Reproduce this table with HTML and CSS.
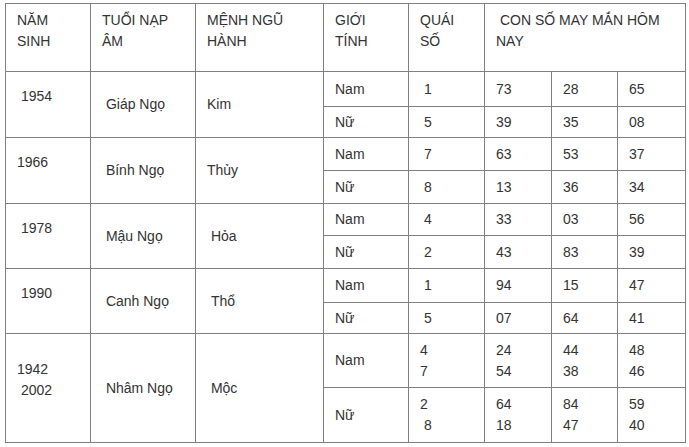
FILE: index.html
```html
<!DOCTYPE html>
<html lang="vi">
<head>
<meta charset="utf-8">
<title>Con số may mắn tuổi Ngọ</title>
<link rel="stylesheet" href="styles.css">
</head>
<body>
<table class="lucky">
  <colgroup>
    <col class="c1"><col class="c2"><col class="c3"><col class="c4"><col class="c5"><col class="c6"><col class="c7"><col class="c8">
  </colgroup>
  <tr class="head">
    <th>NĂM SINH</th>
    <th>TUỔI NẠP ÂM</th>
    <th>MỆNH NGŨ HÀNH</th>
    <th>GIỚI TÍNH</th>
    <th>QUÁI SỐ</th>
    <th colspan="3">&nbsp;CON SỐ MAY MẮN HÔM NAY</th>
  </tr>
  <tr class="h35">
    <td rowspan="2" class="year">&nbsp;1954</td>
    <td rowspan="2">&nbsp;Giáp Ngọ</td>
    <td rowspan="2">Kim</td>
    <td>Nam</td><td>&nbsp;1</td><td>73</td><td>28</td><td>65</td>
  </tr>
  <tr class="h31">
    <td>Nữ</td><td>&nbsp;5</td><td>39</td><td>35</td><td>08</td>
  </tr>
  <tr class="h33">
    <td rowspan="2" class="year">1966</td>
    <td rowspan="2">&nbsp;Bính Ngọ</td>
    <td rowspan="2">Thủy</td>
    <td>Nam</td><td>&nbsp;7</td><td>63</td><td>53</td><td>37</td>
  </tr>
  <tr class="h33">
    <td>Nữ</td><td>&nbsp;8</td><td>13</td><td>36</td><td>34</td>
  </tr>
  <tr class="h32">
    <td rowspan="2" class="year">&nbsp;1978</td>
    <td rowspan="2">&nbsp;Mậu Ngọ</td>
    <td rowspan="2">&nbsp;Hỏa</td>
    <td>Nam</td><td>&nbsp;4</td><td>33</td><td>03</td><td>56</td>
  </tr>
  <tr class="h33">
    <td>Nữ</td><td>&nbsp;2</td><td>43</td><td>83</td><td>39</td>
  </tr>
  <tr class="h34">
    <td rowspan="2" class="year">&nbsp;1990</td>
    <td rowspan="2">&nbsp;Canh Ngọ</td>
    <td rowspan="2">&nbsp;Thổ</td>
    <td>Nam</td><td>&nbsp;1</td><td>94</td><td>15</td><td>47</td>
  </tr>
  <tr class="h31">
    <td>Nữ</td><td>&nbsp;5</td><td>07</td><td>64</td><td>41</td>
  </tr>
  <tr class="h54">
    <td rowspan="2" class="year">1942<br>&nbsp;2002</td>
    <td rowspan="2">&nbsp;Nhâm Ngọ</td>
    <td rowspan="2">&nbsp;Mộc</td>
    <td>Nam</td><td>4<br>7</td><td>24<br>54</td><td>44<br>38</td><td>48<br>46</td>
  </tr>
  <tr class="h55">
    <td>Nữ</td><td>2<br>&nbsp;8</td><td>64<br>18</td><td>84<br>47</td><td>59<br>40</td>
  </tr>
</table>
</body>
</html>
```

FILE: styles.css
```css
html, body {
  margin: 0;
  padding: 0;
  background: #ffffff;
}

body {
  padding: 3px 0 0 5px;
  font-family: "Liberation Sans", Arial, sans-serif;
  font-size: 14px;
  line-height: 21px;
  color: #333333;
}

.lucky {
  border-collapse: collapse;
  table-layout: fixed;
  width: 680px;
}

.c1 { width: 85px; }
.c2 { width: 105px; }
.c3 { width: 128px; }
.c4 { width: 85px; }
.c5 { width: 76px; }
.c6 { width: 67px; }
.c7 { width: 66px; }
.c8 { width: 68px; }

.lucky th,
.lucky td {
  border: 1px solid #808080;
  padding: 0 10px 0 11px;
  text-align: left;
  font-weight: normal;
  vertical-align: middle;
}

.lucky th {
  vertical-align: top;
  padding-top: 6px;
}

.lucky td.year {
  padding-bottom: 16px;
}

.head { height: 68px; }
.h31 { height: 31px; }
.h32 { height: 32px; }
.h33 { height: 33px; }
.h34 { height: 34px; }
.h35 { height: 35px; }
.h54 { height: 54px; }
.h55 { height: 55px; }
```
